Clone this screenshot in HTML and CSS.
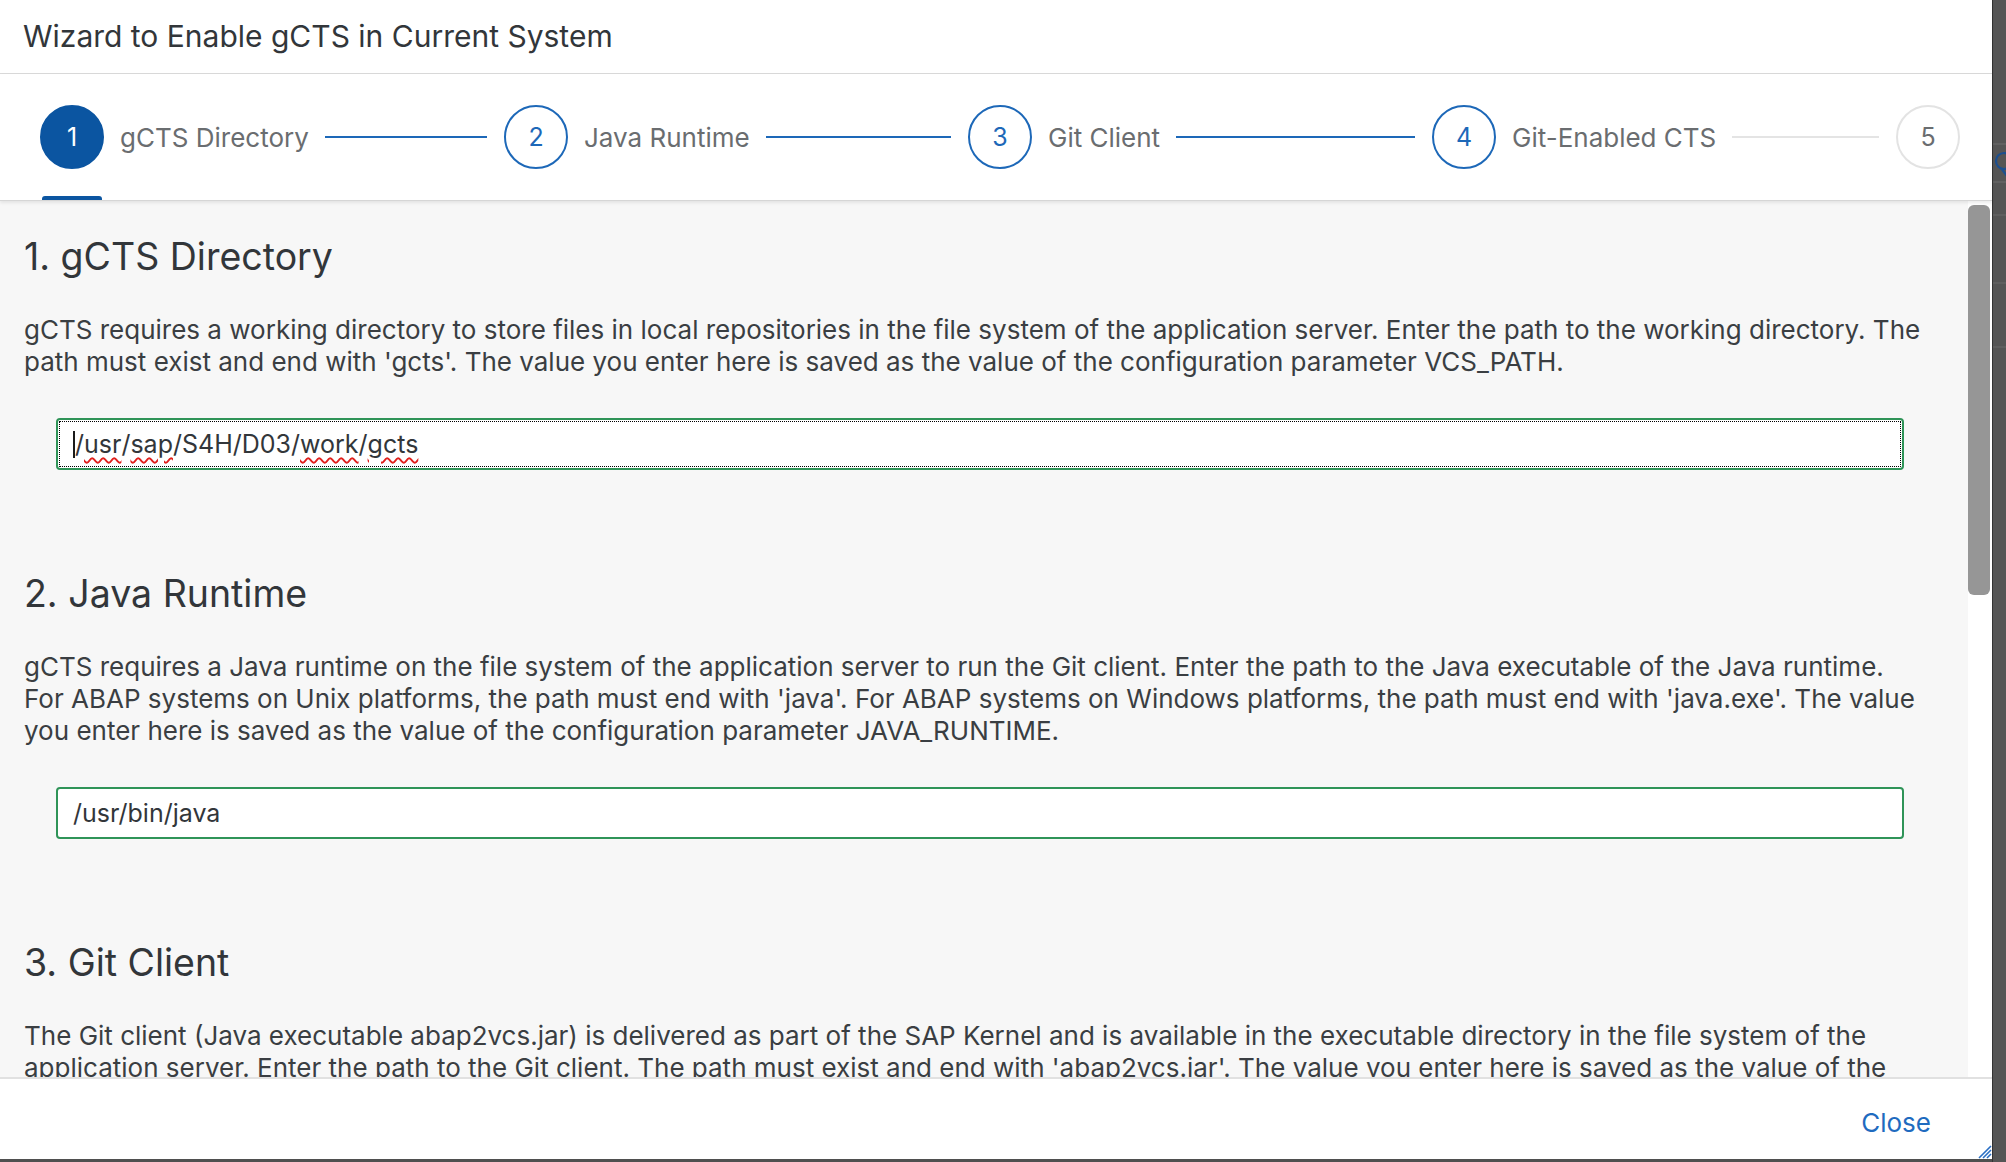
FILE: index.html
```html
<!DOCTYPE html>
<html lang="en">
<head>
<meta charset="utf-8">
<title>Wizard to Enable gCTS in Current System</title>
<link rel="stylesheet" href="styles.css">
</head>
<body>
<div class="screen">
  <div class="dialog">
    <header class="dlg-header">
      <h1 class="dlg-title">Wizard to Enable gCTS in Current System</h1>
    </header>
    <nav class="wizard-nav">
      <div class="step step-active">
        <span class="step-num">1</span>
        <span class="step-label">gCTS Directory</span>
        <span class="step-line"></span>
      </div>
      <div class="step">
        <span class="step-num">2</span>
        <span class="step-label">Java Runtime</span>
        <span class="step-line"></span>
      </div>
      <div class="step">
        <span class="step-num">3</span>
        <span class="step-label">Git Client</span>
        <span class="step-line"></span>
      </div>
      <div class="step">
        <span class="step-num">4</span>
        <span class="step-label">Git-Enabled CTS</span>
        <span class="step-line step-line-muted"></span>
      </div>
      <div class="step step-last step-pending">
        <span class="step-num">5</span>
      </div>
      <span class="step-indicator"></span>
    </nav>
    <div class="dlg-body">
      <div class="content">
        <section class="wz-section">
          <h2 class="wz-heading">1. gCTS Directory</h2>
          <p class="wz-text">gCTS requires a working directory to store files in local repositories in the file system of the application server. Enter the path to the working directory. The<br>path must exist and end with 'gcts'. The value you enter here is saved as the value of the configuration parameter VCS_PATH.</p>
          <div class="field field-focused"><span class="caret"></span>/<span class="spell">usr</span>/<span class="spell">sap</span>/S4H/D03/<span class="spell">work</span>/<span class="spell">gcts</span></div>
        </section>
        <section class="wz-section">
          <h2 class="wz-heading">2. Java Runtime</h2>
          <p class="wz-text">gCTS requires a Java runtime on the file system of the application server to run the Git client. Enter the path to the Java executable of the Java runtime.<br>For ABAP systems on Unix platforms, the path must end with 'java'. For ABAP systems on Windows platforms, the path must end with 'java.exe'. The value<br>you enter here is saved as the value of the configuration parameter JAVA_RUNTIME.</p>
          <div class="field">/usr/bin/java</div>
        </section>
        <section class="wz-section">
          <h2 class="wz-heading">3. Git Client</h2>
          <p class="wz-text">The Git client (Java executable abap2vcs.jar) is delivered as part of the SAP Kernel and is available in the executable directory in the file system of the<br>application server. Enter the path to the Git client. The path must exist and end with 'abap2vcs.jar'. The value you enter here is saved as the value of the</p>
        </section>
      </div>
      <div class="scroll-track"><div class="scroll-thumb"></div></div>
    </div>
    <footer class="dlg-footer">
      <button class="btn-close" type="button">Close</button>
      <svg class="resize-grip" width="16" height="16" viewBox="0 0 16 16">
        <path d="M15 3 L3 15 M15 7 L7 15 M15 11 L11 15" stroke="#2a6fc4" stroke-width="1.6" fill="none"/>
      </svg>
    </footer>
  </div>
  <div class="backdrop-edge">
    <svg class="backdrop-art" width="14" height="1162" viewBox="0 0 14 1162">
      <line x1="0" y1="144" x2="14" y2="144" stroke="#6e6e6e" stroke-width="1"/>
      <line x1="0" y1="182" x2="14" y2="182" stroke="#6e6e6e" stroke-width="1"/>
      <line x1="0" y1="215" x2="14" y2="215" stroke="#6a6a6a" stroke-width="1"/>
      <line x1="0" y1="283" x2="14" y2="283" stroke="#6a6a6a" stroke-width="1"/>
      <line x1="0" y1="347" x2="14" y2="347" stroke="#6a6a6a" stroke-width="1"/>
      <circle cx="11" cy="161" r="8" stroke="#1c4f8f" stroke-width="2.2" fill="none"/>
      <line x1="8" y1="168" x2="14" y2="176" stroke="#1c4f8f" stroke-width="2.2"/>
    </svg>
  </div>
</div>
</body>
</html>
```

FILE: styles.css
```css
html, body {
  margin: 0;
  padding: 0;
}

body {
  background: #4f4f4f;
  font-family: Inter, "Liberation Sans", Arial, sans-serif;
  color: #32363a;
}

.screen {
  display: flex;
  width: 2006px;
  height: 1162px;
  overflow: hidden;
}

.dialog {
  width: 1992px;
  height: 1159px;
  flex: none;
  display: flex;
  flex-direction: column;
  background: #ffffff;
  position: relative;
}

/* header */
.dlg-header {
  height: 74px;
  flex: none;
  display: flex;
  align-items: center;
  padding: 0 0 2px 23px;
  box-sizing: border-box;
  border-bottom: 1px solid #d9d9d9;
  box-shadow: 0 1px 2px rgba(0, 0, 0, 0.08);
  position: relative;
  z-index: 2;
  background: #fff;
}

.dlg-title {
  margin: 0;
  font-size: 30px;
  font-weight: 400;
  color: #32363a;
}

/* wizard progress */
.wizard-nav {
  height: 127px;
  flex: none;
  display: flex;
  align-items: center;
  padding-left: 40px;
  box-sizing: border-box;
  border-bottom: 1px solid #d6d6d6;
  box-shadow: 0 2px 3px rgba(0, 0, 0, 0.08);
  position: relative;
  z-index: 2;
  background: #fff;
}

.step {
  display: flex;
  align-items: center;
  width: 464px;
  padding-right: 17px;
  box-sizing: border-box;
  flex: none;
}

.step-last {
  width: auto;
  padding-right: 0;
}

.step-num {
  width: 64px;
  height: 64px;
  flex: none;
  box-sizing: border-box;
  border-radius: 50%;
  border: 2px solid #1d68b8;
  color: #1d68b8;
  background: #fff;
  display: flex;
  align-items: center;
  justify-content: center;
  font-size: 25px;
}

.step-active .step-num {
  background: #0b55a1;
  border-color: #0b55a1;
  color: #fff;
}

.step-pending .step-num {
  border-color: #e3e3e3;
  color: #6a6d70;
}

.step-label {
  margin-left: 16px;
  font-size: 26px;
  color: #6a6d70;
  white-space: nowrap;
}

.step-line {
  flex: 1;
  height: 2px;
  margin-left: 16px;
  background: #1d68b8;
}

.step-line-muted {
  background: #e4e4e4;
}

.step-indicator {
  position: absolute;
  left: 42px;
  bottom: 0;
  width: 60px;
  height: 4px;
  background: #0b55a1;
  border-radius: 3px 3px 0 0;
}

/* body */
.dlg-body {
  flex: 1;
  min-height: 0;
  display: flex;
}

.content {
  flex: 1;
  min-width: 0;
  background: #f7f7f7;
  padding: 34px 48px 0 24px;
  overflow: hidden;
}

.wz-section {
  margin-bottom: 102px;
}

.wz-heading {
  margin: 0;
  font-size: 37.5px;
  line-height: 44px;
  font-weight: 400;
  color: #32363a;
}

.wz-text {
  margin: 35px 0 0;
  font-size: 26px;
  line-height: 32px;
  color: #3a3e42;
  white-space: nowrap;
}

.field {
  margin: 40px 16px 0 32px;
  height: 52px;
  box-sizing: border-box;
  border: 2px solid #2f9458;
  border-radius: 4px;
  background: #fff;
  display: flex;
  align-items: center;
  padding-left: 15px;
  font-size: 25px;
  color: #32363a;
  white-space: pre;
}

.field-focused {
  outline: 1px dotted #000;
  outline-offset: -4px;
}

.caret {
  width: 2px;
  height: 27px;
  background: #1a1a1a;
}

.spell {
  text-decoration: underline wavy #e0201c;
  text-decoration-thickness: 1.5px;
  text-underline-offset: 4px;
}

.scroll-track {
  width: 24px;
  flex: none;
  background: #fff;
  padding-top: 4px;
  box-sizing: border-box;
}

.scroll-thumb {
  width: 22px;
  height: 390px;
  background: #969696;
  border-radius: 6px;
}

/* footer */
.dlg-footer {
  height: 82px;
  flex: none;
  box-sizing: border-box;
  border-top: 2px solid #e1e1e1;
  display: flex;
  align-items: center;
  justify-content: flex-end;
  padding: 6px 61px 0 0;
  position: relative;
  background: #fff;
}

.btn-close {
  background: none;
  border: 0;
  padding: 0;
  font-family: Inter, "Liberation Sans", Arial, sans-serif;
  font-size: 26px;
  color: #1f6bbf;
  cursor: pointer;
}

.resize-grip {
  position: absolute;
  right: 0;
  bottom: 0;
}

/* background app visible to the right */
.backdrop-edge {
  flex: 1;
  background: #555555;
  border-left: 1px solid #333;
  overflow: hidden;
}

.backdrop-art {
  display: block;
}
```
